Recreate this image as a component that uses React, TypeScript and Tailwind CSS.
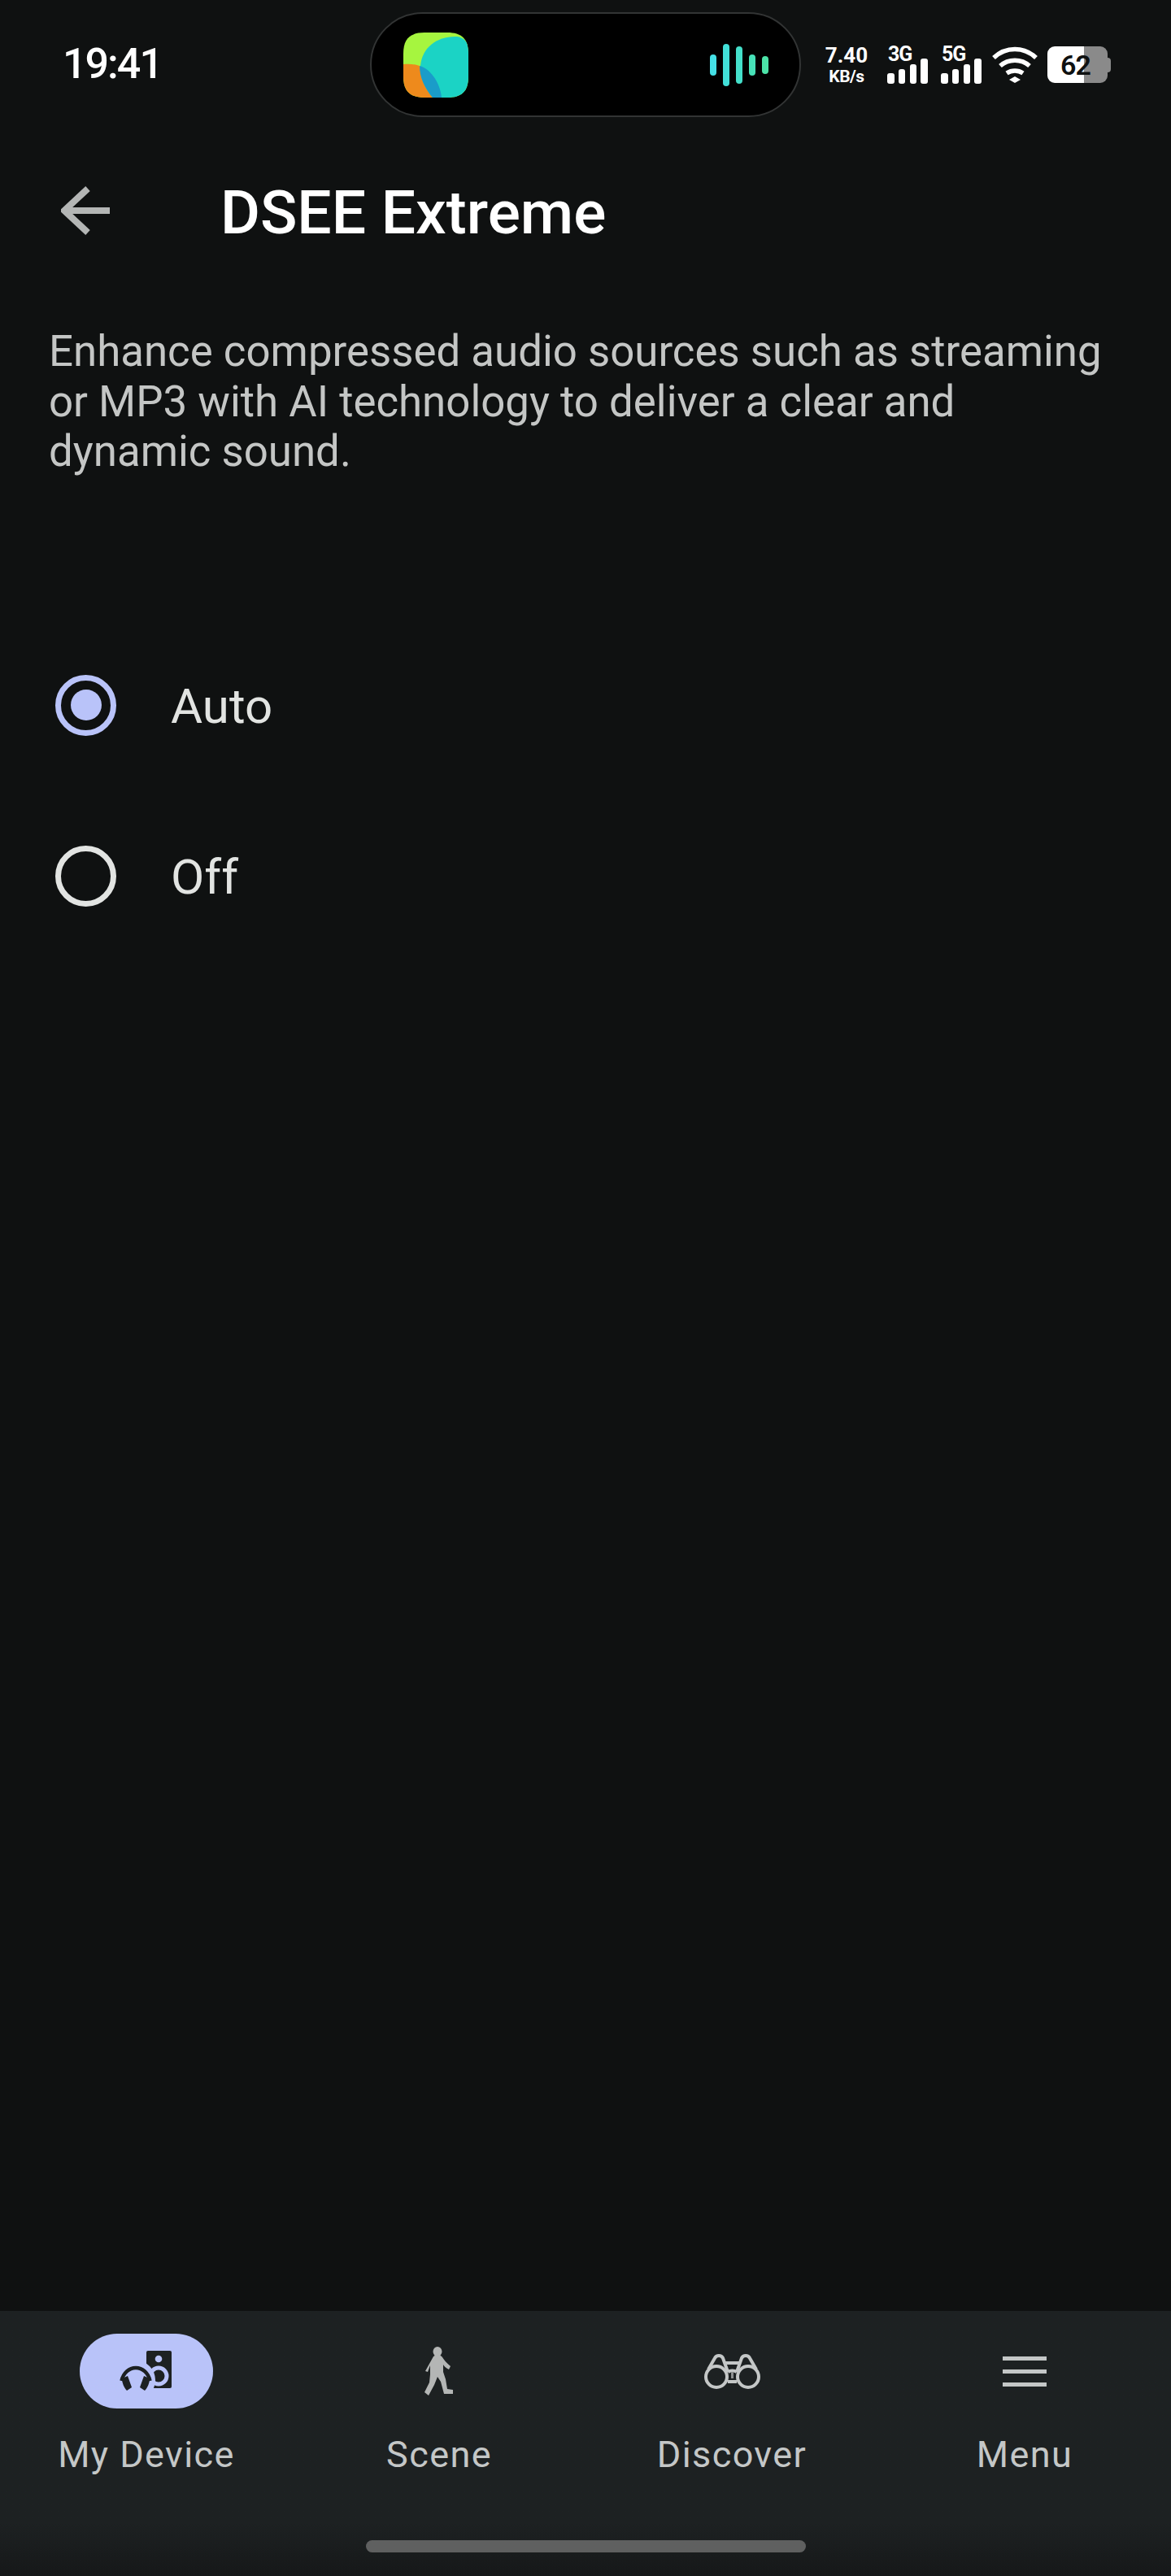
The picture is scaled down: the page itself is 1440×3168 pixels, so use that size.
const FONT = "font-['Roboto',sans-serif]";

function AppIcon() {
  return (
    <svg width="80" height="80" viewBox="0 0 80 80" className="shrink-0">
      <defs>
        <clipPath id="squircle">
          <path d="M26 0H54C72 0 80 8 80 26V54C80 72 72 80 54 80H26C8 80 0 72 0 54V26C0 8 8 0 26 0Z" />
        </clipPath>
      </defs>
      <g clipPath="url(#squircle)">
        <rect width="80" height="80" fill="#a6f53f" />
        <path d="M0 39C12 38 20 40 24 44C24 60 30 72 38 80H0Z" fill="#ee8a1c" />
        <path d="M21 41C23 18 42 4 66 5C74 6 80 12 80 20V80H36C26 68 20 55 21 41Z" fill="#1bd3c5" />
        <path d="M20 41C32 44 45 60 47 80H36C26 68 20 55 20 41Z" fill="#1a9cc9" />
      </g>
    </svg>
  );
}

function Wave() {
  const bars = [
    { h: "h-[26px]", c: "bg-[#45e0e6]" },
    { h: "h-[52px]", c: "bg-[#42dfd8]" },
    { h: "h-[46px]", c: "bg-[#44dfca]" },
    { h: "h-[26px]", c: "bg-[#47e1b8]" },
    { h: "h-[22px]", c: "bg-[#4ce3a8]" },
  ];
  return (
    <div className="flex items-center gap-2">
      {bars.map((b, i) => (
        <span key={i} className={`w-2 rounded-full ${b.h} ${b.c}`} />
      ))}
    </div>
  );
}

function Signal({ label }: { label: string }) {
  const heights = ["h-[13px]", "h-[18px]", "h-6", "h-[31px]"];
  return (
    <div className="flex w-[50px] flex-col">
      <span className="ml-[1px] h-[15px] text-[25px] leading-[20px] font-bold tracking-[-1px] text-white">{label}</span>
      <div className="flex h-[31px] items-end justify-between">
        {heights.map((h) => (
          <span key={h} className={`w-[8.5px] rounded-[3px] bg-white ${h}`} />
        ))}
      </div>
    </div>
  );
}

function Wifi() {
  return (
    <svg width="56" height="45" viewBox="0 0 56 45" fill="none" stroke="#fff" strokeWidth="5.5" className="mr-[12px] ml-[13px]">
      <path d="M2 14C17 0 39 0 54 14" />
      <path d="M10 24C20 15 36 15 46 24" />
      <path d="M18 33C24 29 32 29 38 33" />
      <path d="M21 41L28 37L35 41L28 45Z" fill="#fff" stroke="none" />
    </svg>
  );
}

function Battery() {
  return (
    <div className="relative flex h-[45px] w-[78px] items-center">
      <div className="flex h-[45px] w-[74px] overflow-hidden rounded-[9px]">
        <div className="w-[45px] bg-white" />
        <div className="flex-1 bg-[#8a8a8a]" />
      </div>
      <div className="h-[18px] w-1 rounded-r-sm bg-[#8a8a8a]" />
      <span className="absolute top-[6px] left-[16px] text-[34px] leading-[34px] font-semibold tracking-[-1px] text-[#0f1111]">62</span>
    </div>
  );
}

function StatusBar() {
  return (
    <div className="flex h-[160px] shrink-0 items-start">
      <span className="mt-[53px] ml-[77px] w-[378px] text-[52px] leading-[52px] font-medium tracking-[-2px] text-white">19:41</span>
      <div className="mt-[15px] flex h-[129px] w-[530px] items-center rounded-full border-[2.5px] border-[#323434] bg-black pr-[38px] pl-[39px]">
        <AppIcon />
        <div className="ml-auto">
          <Wave />
        </div>
      </div>
      <div className="mt-[57px] ml-[29px] flex items-start">
        <div className="flex w-[54px] flex-col items-center font-bold text-white">
          <span className="text-[26px] leading-[22px]">7.40</span>
          <span className="mt-[5px] text-[21px] leading-[20px] tracking-[-0.5px]">KB/s</span>
        </div>
        <div className="ml-[23px] flex gap-[16px]">
          <Signal label="3G" />
          <Signal label="5G" />
        </div>
        <Wifi />
        <Battery />
      </div>
    </div>
  );
}

function Radio({ label, checked }: { label: string; checked?: boolean }) {
  return (
    <div className="flex h-[75px] items-center">
      <span
        className={`flex size-[75px] items-center justify-center rounded-full border-[7px] ${
          checked ? "border-[#b9c3f9]" : "border-[#e2e4e2]"
        }`}
      >
        {checked && <span className="size-[38px] rounded-full bg-[#b9c3f9]" />}
      </span>
      <span className="mt-[2px] ml-[67px] text-[60px] leading-[75px] text-[#e2e4e2]">{label}</span>
    </div>
  );
}

function SpeakerIcon() {
  return (
    <svg width="66" height="50" viewBox="0 0 66 50">
      <rect x="33" y="0" width="31" height="46" rx="2" fill="#1d2122" />
      <circle cx="48" cy="10" r="4.300" fill="#b9c3f9" />
      <circle cx="48" cy="31" r="10" fill="#1d2122" stroke="#b9c3f9" strokeWidth="5" />
      <circle cx="20" cy="36" r="24" fill="#b9c3f9" />
      <path d="M2.500 37A18 21 0 0 1 37.500 37" fill="none" stroke="#1d2122" strokeWidth="4.500" />
      <path d="M3 34L10 31L15 45L9 49C6 46 3 40 3 34Z" fill="#1d2122" />
      <path d="M37 34L30 31L25 45L31 49C34 46 37 40 37 34Z" fill="#1d2122" />
    </svg>
  );
}

function WalkIcon() {
  return (
    <svg width="36" height="60" viewBox="0 0 36 60" fill="#b4b6b5">
      <ellipse cx="16" cy="6" rx="5.500" ry="6" />
      <path d="M11 12C14 10 20 10 22 13C24 16 27 20 32 24L30 28C26 26 24 24 23 22L23 31L26 40L28 52L35 53V58L24 58L20 43L16 37L12 47L5 60L0 56L6 44L7 34L7 23L4 31L1 30Z" />
    </svg>
  );
}

function BinocularsIcon() {
  return (
    <svg width="69" height="43" viewBox="0 0 69 43" fill="none" stroke="#c4c7c7" strokeWidth="4">
      <circle cx="15" cy="28" r="13" />
      <circle cx="54" cy="28" r="13" />
      <path d="M5 19L13 5C15 1 21 1 23 5L29 22" />
      <path d="M64 19L56 5C54 1 48 1 46 5L40 22" />
      <path d="M24 11H45" />
      <path d="M29 22C32 20 37 20 40 22" />
      <path d="M29 34H40" />
      <path d="M34.500 22V30" strokeWidth="3" stroke="#8e9191" />
    </svg>
  );
}

function MenuIcon() {
  return (
    <div className="flex h-[37px] w-[54px] flex-col justify-between">
      <span className="h-[5px] bg-[#c4c7c7]" />
      <span className="h-[5px] bg-[#c4c7c7]" />
      <span className="h-[5px] bg-[#c4c7c7]" />
    </div>
  );
}

function NavItem({ label, active, children }: { label: string; active?: boolean; children: React.ReactNode }) {
  return (
    <div className="flex flex-col items-center">
      <div className={`flex h-[92px] w-[164px] items-center justify-center rounded-full ${active ? "bg-[#b9c3f9]" : ""}`}>
        {children}
      </div>
      <span className="mt-[29px] text-[45px] leading-[56px] tracking-[1.4px] text-[#c4c7c7]">{label}</span>
    </div>
  );
}

export default function App() {
  return (
    <div className={`${FONT} flex h-[3168px] w-[1440px] flex-col overflow-hidden bg-[#0f1111]`}>
      <StatusBar />

      <div className="mt-[69px] flex h-[60px] items-center">
        <svg width="60" height="60" viewBox="0 0 60 60" fill="none" stroke="#b4b6b5" strokeWidth="8" className="ml-[75px]">
          <path d="M60 30H5" />
          <path d="M33 3L4 30L33 57" />
        </svg>
        <h1 className="mt-[3px] ml-[136px] text-[75px] leading-[60px] font-medium text-white">DSEE Extreme</h1>
      </div>

      <p className="mt-[113px] w-[1380px] pl-[60px] text-[52.800px] leading-[61.500px] text-[#c4c6c5]">
        Enhance compressed audio sources such as streaming or MP3 with AI technology to deliver a clear and dynamic sound.
      </p>

      <div className="mt-[243px] flex flex-col gap-[135px] pl-[68px]">
        <Radio label="Auto" checked />
        <Radio label="Off" />
      </div>

      <nav className="mt-auto flex h-[326px] shrink-0 flex-col bg-gradient-to-b from-[#1d2122] from-80% to-[#161819]">
        <div className="grid grid-cols-4 pt-[28px]">
          <NavItem label="My Device" active>
            <SpeakerIcon />
          </NavItem>
          <NavItem label="Scene">
            <WalkIcon />
          </NavItem>
          <NavItem label="Discover">
            <BinocularsIcon />
          </NavItem>
          <NavItem label="Menu">
            <MenuIcon />
          </NavItem>
        </div>
        <div className="mx-auto mt-[77px] h-[15px] w-[541px] rounded-full bg-[#5f6060]" />
      </nav>
    </div>
  );
}
